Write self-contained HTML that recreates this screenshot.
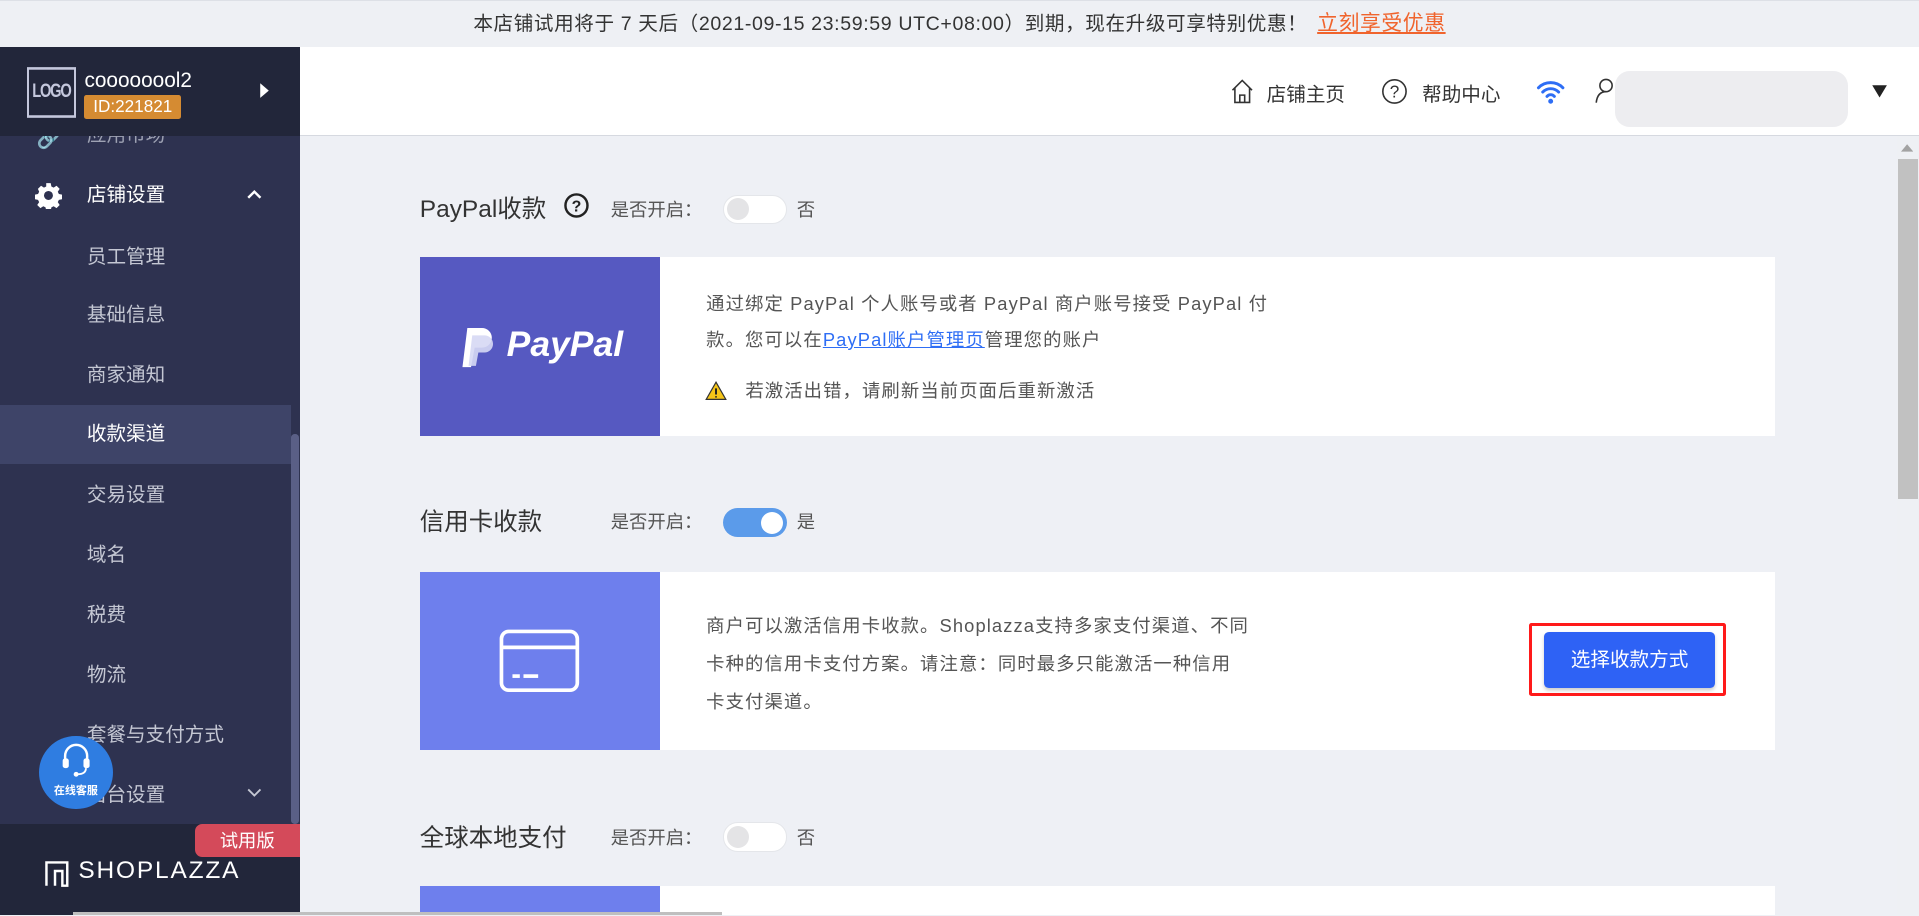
<!DOCTYPE html>
<html><head><meta charset="utf-8"><style>
*{margin:0;padding:0;box-sizing:border-box}
html,body{width:1919px;height:916px;overflow:hidden}
body{background:#eef0f5;font-family:"Liberation Sans","Noto Sans CJK SC",sans-serif;color:#333}
#w{zoom:1.22385;width:1568px;height:748px;position:relative;overflow:hidden;background:#eef0f5}
.a{position:absolute}
.banner{left:0;top:0;width:1568px;height:38px;background:#eef0f4;border-top:1px solid #dde0e6;text-align:center;font-size:16px;line-height:38px;color:#333;letter-spacing:.5px}
.banner a{color:#f0642d;text-decoration:underline;margin-left:8px;font-size:17px}
.side{left:0;top:38px;width:245px;height:710px;background:#2e3250}
.shead{left:0;top:38px;width:245px;height:73px;background:#22263a}
.menu{left:0;width:238px;height:49px;color:#c4c7d3;font-size:16px;line-height:49px;padding-left:71px}
.sfoot{left:0;top:673px;width:245px;height:75px;background:#22263a}
.head{left:245px;top:38px;width:1323px;height:73px;background:#fff;border-bottom:1px solid #d6d9e0}
.title{font-size:20px;color:#333}
.lab{font-size:15px;color:#555}
.tog{width:52px;height:24px;border-radius:12px}
.card{left:343px;width:1107px;height:146px;background:#fff}
.txt{font-size:15px;color:#555;letter-spacing:.9px}
</style></head><body><div id="w">
<div class="a banner">本店铺试用将于 7 天后（2021-09-15 23:59:59 UTC+08:00）到期，现在升级可享特别优惠！<a>立刻享受优惠</a></div>

<div class="a side"></div>
<div class="a" style="left:0;top:331px;width:238px;height:48px;background:#3e4468"></div>
<div class="a menu" style="top:87px;color:#9ea2b3">应用市场</div>
<div class="a" style="left:30px;top:104px;color:#9ea2b3;font-size:16px">&#x1F517;</div>
<div class="a menu" style="top:136px;color:#fff">店铺设置</div>
<svg class="a" style="left:29px;top:149px" width="22" height="22" viewBox="0 0 24 24"><path fill="#fff" d="M10 1h4l.6 3 2 1 2.6-1.7 2.8 2.8-1.7 2.6 1 2 3 .6v4l-3 .6-1 2 1.7 2.6-2.8 2.8-2.6-1.7-2 1-.6 3h-4l-.6-3-2-1-2.6 1.7-2.8-2.8 1.7-2.6-1-2-3-.6v-4l3-.6 1-2L2.6 6.1l2.8-2.8L8 5l2-1zM12 8a4 4 0 100 8 4 4 0 000-8z"/></svg>
<svg class="a" style="left:202px;top:154px" width="12" height="10"><path d="M1 8l5-5 5 5" stroke="#fff" stroke-width="2" fill="none"/></svg>
<div class="a menu" style="top:186px">员工管理</div>
<div class="a menu" style="top:234px">基础信息</div>
<div class="a menu" style="top:283px">商家通知</div>
<div class="a menu" style="top:331px;color:#fff">收款渠道</div>
<div class="a menu" style="top:381px">交易设置</div>
<div class="a menu" style="top:430px">域名</div>
<div class="a menu" style="top:479px">税费</div>
<div class="a menu" style="top:528px">物流</div>
<div class="a menu" style="top:577px">套餐与支付方式</div>
<div class="a menu" style="top:626px">后台设置</div>
<svg class="a" style="left:202px;top:643px" width="12" height="10"><path d="M1 2l5 5 5-5" stroke="#c4c7d3" stroke-width="1.5" fill="none"/></svg>
<div class="a" style="left:238px;top:355px;width:6px;height:318px;background:#5a5f86;border-radius:3px"></div>
<div class="a" style="left:32px;top:601px;width:60px;height:60px;border-radius:50%;background:#2f7de1;color:#fff;font-size:9px;font-weight:bold;text-align:center;padding-top:38px">在线客服</div>
<svg class="a" style="left:48px;top:605px" width="28" height="32" viewBox="0 0 28 32"><path d="M5 18v-5a9 9 0 0118 0v5" stroke="#fff" stroke-width="2" fill="none"/><rect x="3" y="15" width="5" height="8" rx="2" fill="#fff"/><rect x="20" y="15" width="5" height="8" rx="2" fill="#fff"/><path d="M22 23q0 5-7 5" stroke="#fff" stroke-width="1.5" fill="none"/><circle cx="14" cy="28" r="2" fill="#fff"/></svg>

<div class="a shead"></div>
<div class="a" style="left:22px;top:60px;width:40px;height:32px;border:2px solid #c4c7dc;color:#c4c7dc;font-weight:bold;font-size:12px;line-height:28px;text-align:center;letter-spacing:-1px;transform:scaleY(1.3)">LOGO</div>
<div class="a" style="left:69px;top:56px;color:#fff;font-size:17px">coooooool2</div>
<div class="a" style="left:69px;top:78px;width:79px;height:19px;background:#d58b32;border-radius:2px;color:#fff;font-size:14px;line-height:19px;text-align:center">ID:221821</div>
<svg class="a" style="left:212px;top:67px" width="10" height="14"><path d="M1 1l7 6-7 6z" fill="#fff"/></svg>

<div class="a sfoot"></div>
<div class="a" style="left:159px;top:673px;width:86px;height:27px;background:#d44a5a;border-radius:6px 0 0 6px;color:#fff;font-size:15px;line-height:27px;text-align:center">试用版</div>
<svg class="a" style="left:36px;top:703px" width="22" height="22"><path d="M2 21V2h17v19h-4V9h-6v12" stroke="#fff" stroke-width="2" fill="none"/></svg>
<div class="a" style="left:64px;top:700px;color:#fff;font-size:20px;letter-spacing:1.5px">SHOPLAZZA</div>

<div class="a head"></div>
<svg class="a" style="left:1005px;top:64px" width="20" height="22" viewBox="0 0 20 22"><path d="M2 10L10 2l8 8M4 8v12h12V8M8 20v-6h4v6" stroke="#333" stroke-width="1.3" fill="none"/></svg>
<div class="a" style="left:1035px;top:64px;font-size:16px;color:#333">店铺主页</div>
<svg class="a" style="left:1128px;top:64px" width="22" height="22"><circle cx="11" cy="11" r="9.5" stroke="#333" stroke-width="1.3" fill="none"/><text x="11" y="16" font-size="14" text-anchor="middle" fill="#333" font-family="Liberation Sans">?</text></svg>
<div class="a" style="left:1162px;top:64px;font-size:16px;color:#333">帮助中心</div>
<svg class="a" style="left:1255px;top:64px" width="24" height="22" viewBox="0 0 24 22"><path d="M2 8a14 14 0 0120 0M5.5 11.5a9 9 0 0113 0M9 15a4 4 0 016 0" stroke="#2e6ef5" stroke-width="2.4" fill="none" stroke-linecap="round"/><circle cx="12" cy="19" r="2" fill="#2e6ef5"/></svg>
<svg class="a" style="left:1303px;top:63px" width="18" height="22"><circle cx="9" cy="7" r="5" stroke="#333" stroke-width="1.3" fill="none"/><path d="M1 21q1-9 8-9" stroke="#333" stroke-width="1.3" fill="none"/></svg>
<div class="a" style="left:1320px;top:58px;width:190px;height:46px;background:#ebebee;border-radius:12px;opacity:.9"></div>
<svg class="a" style="left:1529px;top:69px" width="14" height="12"><path d="M1 1h12l-6 10z" fill="#222"/></svg>

<div class="a" style="left:1550px;top:111px;width:18px;height:637px;background:#eef0f4"></div>
<div class="a" style="left:1551px;top:130px;width:16px;height:278px;background:#c1c1c1"></div>
<svg class="a" style="left:1553px;top:117px" width="10" height="8"><path d="M0 7l5-6 5 6z" fill="#a3a3a3"/></svg>

<div class="a title" style="left:343px;top:155px">PayPal收款</div>
<svg class="a" style="left:460px;top:157px" width="22" height="22"><circle cx="11" cy="11" r="9" stroke="#222" stroke-width="2" fill="none"/><text x="11" y="16" font-size="13" font-weight="bold" text-anchor="middle" fill="#222" font-family="Liberation Sans">?</text></svg>
<div class="a lab" style="left:499px;top:160px">是否开启：</div>
<div class="a tog" style="left:591px;top:159px;background:#fff;border:1px solid #e4e6ea"></div>
<div class="a" style="left:594px;top:162px;width:18px;height:18px;border-radius:50%;background:#e4e4e6"></div>
<div class="a lab" style="left:651px;top:160px">否</div>

<div class="a card" style="top:210px"></div>
<div class="a" style="left:343px;top:210px;width:196px;height:146px;background:#5659c1"></div>
<svg class="a" style="left:376px;top:268px" width="30" height="34" viewBox="0 0 30 34"><path d="M6 0h12a8 8 0 010 16h-6l-3 16H2z" fill="#fff"/><path d="M10 6h10a7 7 0 010 14h-5l-2 11H7z" fill="#d6d8f4" opacity=".9"/></svg>
<div class="a" style="left:414px;top:265px;color:#fff;font-size:29px;font-weight:bold;font-style:italic">PayPal</div>
<div class="a txt" style="left:577px;top:234px;line-height:29px;width:520px">通过绑定 PayPal 个人账号或者 PayPal 商户账号接受 PayPal 付<br>款。您可以在<span style="color:#2e6ef5;text-decoration:underline">PayPal账户管理页</span>管理您的账户</div>
<svg class="a" style="left:576px;top:311px" width="18" height="16"><path d="M9 1l8 14H1z" fill="#f5c518" stroke="#333" stroke-width="1"/><path d="M9 6v5M9 12.5v1" stroke="#222" stroke-width="1.6"/></svg>
<div class="a txt" style="left:609px;top:308px">若激活出错，请刷新当前页面后重新激活</div>

<div class="a title" style="left:343px;top:411px">信用卡收款</div>
<div class="a lab" style="left:499px;top:415px">是否开启：</div>
<div class="a tog" style="left:591px;top:415px;background:#5b9bea"></div>
<div class="a" style="left:622px;top:418px;width:18px;height:18px;border-radius:50%;background:#fff"></div>
<div class="a lab" style="left:651px;top:415px">是</div>

<div class="a card" style="top:467px"></div>
<div class="a" style="left:343px;top:467px;width:196px;height:146px;background:#6e7fed"></div>
<svg class="a" style="left:408px;top:514px" width="66" height="52" viewBox="0 0 66 52"><rect x="2" y="2" width="62" height="48" rx="6" stroke="#fff" stroke-width="3" fill="none"/><path d="M2 15h62" stroke="#fff" stroke-width="3"/><rect x="11" y="37" width="6" height="3" fill="#fff"/><rect x="20" y="37" width="12" height="3" fill="#fff"/></svg>
<div class="a txt" style="left:577px;top:496px;line-height:31px;width:520px">商户可以激活信用卡收款。Shoplazza支持多家支付渠道、不同<br>卡种的信用卡支付方案。请注意：同时最多只能激活一种信用<br>卡支付渠道。</div>
<div class="a" style="left:1249px;top:509px;width:161px;height:60px;border:3px solid #ff1a1a;border-radius:2px"></div>
<div class="a" style="left:1262px;top:516px;width:139px;height:46px;background:#2e62f5;border-radius:4px;color:#fff;font-size:16px;line-height:46px;text-align:center;box-shadow:0 2px 3px rgba(0,0,0,.2)">选择收款方式</div>

<div class="a title" style="left:343px;top:669px">全球本地支付</div>
<div class="a lab" style="left:499px;top:673px">是否开启：</div>
<div class="a tog" style="left:591px;top:672px;background:#fff;border:1px solid #e4e6ea"></div>
<div class="a" style="left:594px;top:675px;width:18px;height:18px;border-radius:50%;background:#e4e4e6"></div>
<div class="a lab" style="left:651px;top:673px">否</div>
<div class="a" style="left:343px;top:724px;width:1107px;height:24px;background:#fff"></div>
<div class="a" style="left:343px;top:724px;width:196px;height:24px;background:#6e7fed"></div>
<div class="a" style="left:60px;top:745px;width:530px;height:3px;background:#bfbfbf"></div>
</div></body></html>
